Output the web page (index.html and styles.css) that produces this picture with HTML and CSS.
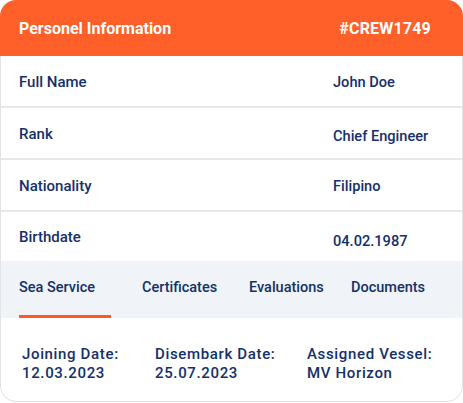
FILE: index.html
```html
<!DOCTYPE html>
<html>
<head>
<meta charset="utf-8">
<link rel="stylesheet" href="styles.css">
</head>
<body>
<div class="card">
  <div class="header">
    <span class="title">Personel Information</span>
    <span class="code">#CREW1749</span>
  </div>
  <div class="rows">
    <div class="row"><span class="label">Full Name</span><span class="value">John Doe</span></div>
    <div class="row"><span class="label">Rank</span><span class="value shift-sm">Chief Engineer</span></div>
    <div class="row"><span class="label">Nationality</span><span class="value">Filipino</span></div>
    <div class="row last"><span class="label">Birthdate</span><span class="value shift-md">04.02.1987</span></div>
  </div>
  <div class="tabs">
    <div class="tab tab-1 active">Sea Service</div>
    <div class="tab tab-2">Certificates</div>
    <div class="tab tab-3">Evaluations</div>
    <div class="tab tab-4">Documents</div>
  </div>
  <div class="content">
    <div class="col col-1"><div>Joining Date:</div><div>12.03.2023</div></div>
    <div class="col col-2"><div>Disembark Date:</div><div>25.07.2023</div></div>
    <div class="col col-3"><div>Assigned Vessel:</div><div>MV Horizon</div></div>
  </div>
</div>
</body>
</html>
```

FILE: styles.css
```css
html, body {
  margin: 0;
  padding: 0;
  background: #ffffff;
}
body {
  font-family: Roboto, "Liberation Sans", sans-serif;
  color: #14306a;
}
.card {
  width: 463px;
  height: 402px;
  border-radius: 16px;
  overflow: hidden;
  display: flex;
  flex-direction: column;
  box-sizing: border-box;
}
.header {
  height: 56px;
  flex: none;
  background: #ff5f28;
  color: #ffffff;
  display: flex;
  align-items: center;
  justify-content: space-between;
  padding: 0 32px 0 19px;
  font-weight: 700;
  font-size: 16px;
}
.code {
  letter-spacing: 0.2px;
}
.rows {
  flex: none;
  border-left: 1px solid #e3e3e3;
  border-right: 1px solid #e3e3e3;
}
.row {
  height: 52px;
  border-bottom: 2px solid #e8e8e8;
  display: flex;
  align-items: center;
  padding: 1px 0 0 18px;
  box-sizing: border-box;
  font-size: 15px;
  font-weight: 500;
}
.row.last {
  height: 49px;
  border-bottom: none;
}
.label {
  width: 314px;
}
.value {
  font-size: 14.6px;
}
.value.shift-sm {
  padding-top: 5px;
}
.value.shift-md {
  padding-top: 7px;
}
.tabs {
  height: 57px;
  flex: none;
  background: #f0f4f9;
  display: flex;
  border-left: 1px solid #e3e3e3;
  border-right: 1px solid #e3e3e3;
  padding-left: 18px;
  box-sizing: border-box;
  font-size: 14.5px;
  font-weight: 500;
}
.tab {
  position: relative;
  display: flex;
  align-items: center;
  height: 100%;
  padding-bottom: 4px;
  box-sizing: border-box;
}
.tab-1 { width: 123px; }
.tab-2 { width: 107px; }
.tab-3 { width: 102px; }
.tab-4 { flex: 1; }
.tab.active::after {
  content: "";
  position: absolute;
  left: 0;
  bottom: 0;
  width: 92px;
  height: 3px;
  background: #ff5a1f;
}
.content {
  flex: 1;
  display: flex;
  padding: 27px 0 0 21px;
  border: 1px solid #e3e3e3;
  border-top: none;
  border-radius: 0 0 16px 16px;
  font-size: 15px;
  font-weight: 500;
  letter-spacing: 0.65px;
  line-height: 19px;
}
.col-1 { width: 133px; }
.col-2 { width: 152px; }
.col-3 { flex: 1; }
```
